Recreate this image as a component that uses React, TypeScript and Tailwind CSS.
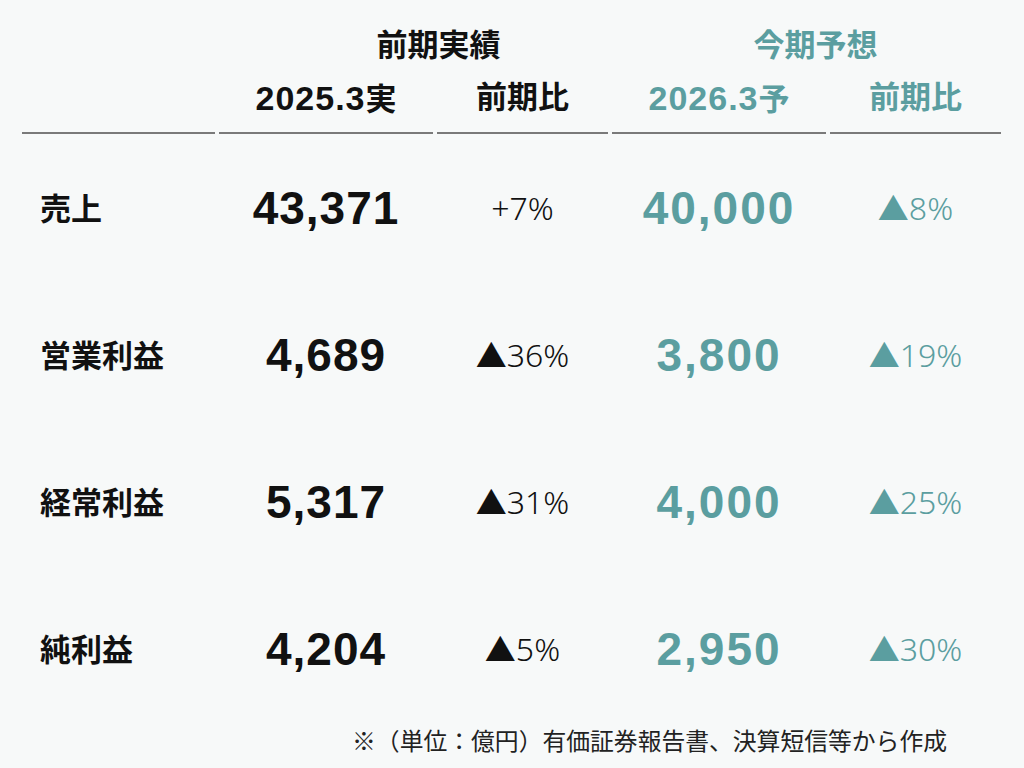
const teal = "text-[#5b9ea0]";

type Row = {
  label: string;
  actual: string;
  actualYoy: string;
  forecast: string;
  forecastYoy: string;
};

const rows: Row[] = [
  { label: "売上", actual: "43,371", actualYoy: "+7%", forecast: "40,000", forecastYoy: "▲8%" },
  { label: "営業利益", actual: "4,689", actualYoy: "▲36%", forecast: "3,800", forecastYoy: "▲19%" },
  { label: "経常利益", actual: "5,317", actualYoy: "▲31%", forecast: "4,000", forecastYoy: "▲25%" },
  { label: "純利益", actual: "4,204", actualYoy: "▲5%", forecast: "2,950", forecastYoy: "▲30%" },
];

function Pct({ value, className }: { value: string; className: string }) {
  const tri = value.startsWith("▲");
  return (
    <span className={`text-[32px] font-light font-['Noto_Sans','Liberation_Sans',sans-serif] ${className}`}>
      {tri && <span className="text-[31px] font-['Noto_Sans_CJK_JP',sans-serif] font-normal">▲</span>}
      {tri ? value.slice(1) : value}
    </span>
  );
}

export default function App() {
  const cols = "grid grid-cols-[193px_214px_171px_214px_171px] gap-x-[4px]";
  return (
    <main className="w-[1024px] h-[768px] bg-[#f7f9f9] font-['Liberation_Sans','Noto_Sans_CJK_JP',sans-serif] text-[#111] overflow-hidden">
      <div className="pl-[22px] pt-[20px]">
        <div className={`${cols} h-[52px] items-center`}>
          <div className="col-start-2 col-span-2 text-center pl-[50px] text-[31px] font-bold">
            前期実績
          </div>
          <div className={`col-span-2 text-center pl-[18px] text-[31px] font-bold ${teal}`}>
            今期予想
          </div>
        </div>
        <div className={`${cols} h-[52px] items-center text-[31px] font-bold`}>
          <div />
          <div className="text-center">
            <span className="text-[34px] tracking-[1px]">2025.3</span>実
          </div>
          <div className="text-center">前期比</div>
          <div className={`text-center ${teal}`}>
            <span className="text-[34px] tracking-[1px]">2026.3</span>予
          </div>
          <div className={`text-center ${teal}`}>前期比</div>
        </div>
        <div className={`${cols} mt-[8px]`}>
          {[0, 1, 2, 3, 4].map((i) => (
            <div key={i} className="h-[2px] bg-[#7a7a7a]" />
          ))}
        </div>
        {rows.map((r) => (
          <div key={r.label} className={`${cols} h-[147px] items-center`}>
            <div className="pl-[18px] text-[31px] font-bold font-['Noto_Sans_CJK_JP',sans-serif]">
              {r.label}
            </div>
            <div className="text-center text-[46px] font-bold leading-none tracking-[1px]">{r.actual}</div>
            <div className="text-center">
              <Pct value={r.actualYoy} className="text-[#111]" />
            </div>
            <div className={`text-center text-[46px] font-bold leading-none tracking-[2px] ${teal}`}>
              {r.forecast}
            </div>
            <div className="text-center">
              <Pct value={r.forecastYoy} className={teal} />
            </div>
          </div>
        ))}
        <div className="h-[36px] flex items-center justify-end pr-[77px] text-[23.8px] text-[#222] font-['Noto_Sans_CJK_JP',sans-serif]">
          ※（単位：億円）有価証券報告書、決算短信等から作成
        </div>
      </div>
    </main>
  );
}
